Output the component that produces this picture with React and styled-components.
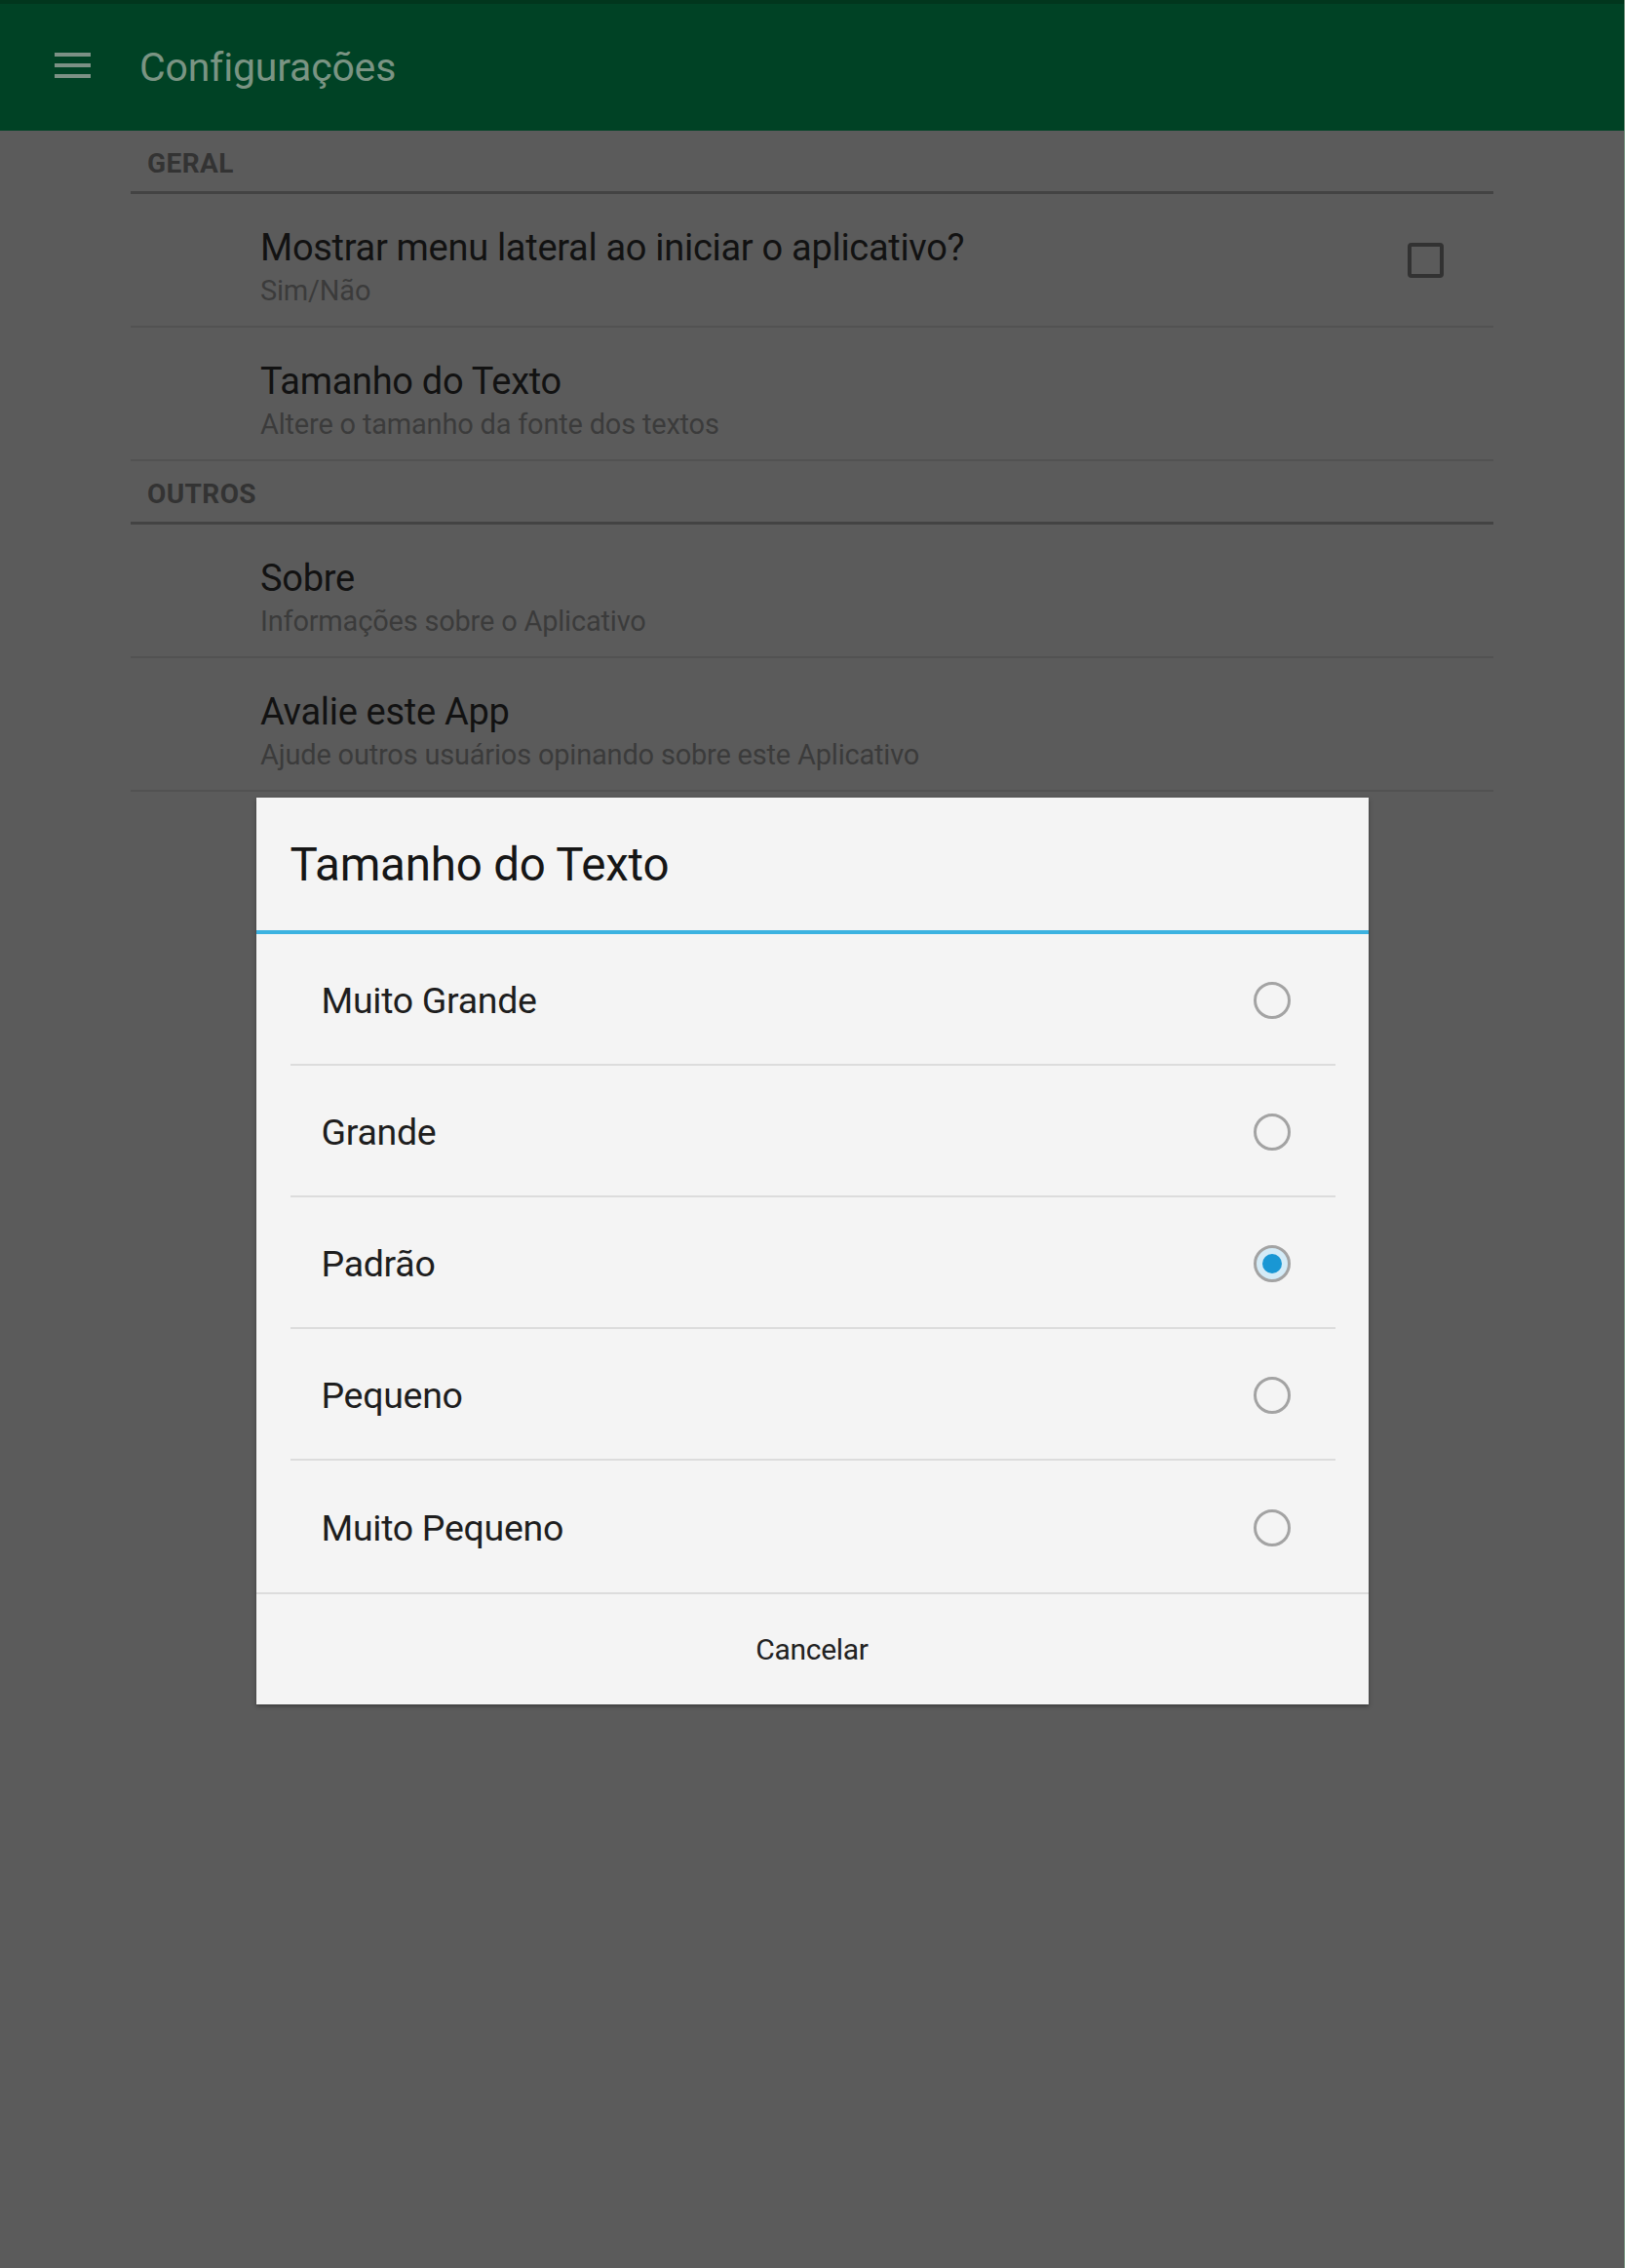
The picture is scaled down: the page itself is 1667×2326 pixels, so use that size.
import React from "react";
import styled, { createGlobalStyle } from "styled-components";

const GlobalStyle = createGlobalStyle`
  body {
    margin: 0;
    background: #5b5b5b;
    font-family: Roboto, "Noto Sans", "Liberation Sans", sans-serif;
  }
`;

const sections = [
  {
    name: "GERAL",
    items: [
      { title: "Mostrar menu lateral ao iniciar o aplicativo?", summary: "Sim/Não", checkbox: true },
      { title: "Tamanho do Texto", summary: "Altere o tamanho da fonte dos textos" },
    ],
  },
  {
    name: "OUTROS",
    items: [
      { title: "Sobre", summary: "Informações sobre o Aplicativo" },
      { title: "Avalie este App", summary: "Ajude outros usuários opinando sobre este Aplicativo" },
    ],
  },
];

const sizes = ["Muito Grande", "Grande", "Padrão", "Pequeno", "Muito Pequeno"];

const App = () => {
  const selected = "Padrão";

  return (
    <Screen>
      <GlobalStyle />
      <Toolbar>
        <MenuIcon>
          <span />
          <span />
          <span />
        </MenuIcon>
        <ToolbarTitle>Configurações</ToolbarTitle>
      </Toolbar>

      <Settings>
        {sections.map((section) => (
          <section key={section.name}>
            <SectionHeader>{section.name}</SectionHeader>
            {section.items.map((item) => (
              <PrefRow key={item.title}>
                <PrefText>
                  <PrefTitle>{item.title}</PrefTitle>
                  <PrefSummary>{item.summary}</PrefSummary>
                </PrefText>
                {item.checkbox && <CheckBox />}
              </PrefRow>
            ))}
          </section>
        ))}
      </Settings>

      <Scrim>
        <Dialog>
          <DialogTitle>Tamanho do Texto</DialogTitle>
          <OptionList>
            {sizes.map((size) => (
              <Option key={size}>
                <OptionLabel>{size}</OptionLabel>
                <Radio checked={size === selected} />
              </Option>
            ))}
          </OptionList>
          <ButtonBar>
            <DialogButton>Cancelar</DialogButton>
          </ButtonBar>
        </Dialog>
      </Scrim>
    </Screen>
  );
};

const Screen = styled.div`
  position: relative;
  min-height: 2326px;
  background: #5b5b5b;
  border-right: 1px solid #7f9a88;
  box-sizing: border-box;
`;

const Toolbar = styled.header`
  height: 134px;
  box-sizing: border-box;
  border-top: 4px solid #01361d;
  background: #004225;
  display: flex;
  align-items: center;
  padding-left: 56px;
  gap: 50px;
`;

const MenuIcon = styled.div`
  width: 37px;
  display: flex;
  flex-direction: column;
  gap: 7px;
  margin-top: -4px;

  > span {
    display: block;
    height: 4px;
    background: #7c9185;
  }
`;

const ToolbarTitle = styled.h1`
  margin: 0;
  font-size: 41px;
  font-weight: 400;
  color: #7a9483;
  letter-spacing: -0.2px;
`;

const Settings = styled.main`
  margin: 0 134px;
`;

const SectionHeader = styled.h2`
  margin: 0;
  height: 65px;
  box-sizing: border-box;
  padding: 18px 0 0 17px;
  border-bottom: 3px solid #434343;
  font-size: 28px;
  font-weight: 700;
  color: #333333;
  line-height: 32px;
  letter-spacing: 0.4px;
`;

const PrefRow = styled.div`
  height: 137px;
  box-sizing: border-box;
  border-bottom: 2px solid #525252;
  display: flex;
  align-items: center;
  padding: 0 51px 0 133px;
`;

const PrefText = styled.div`
  flex: 1;
  align-self: flex-start;
  display: flex;
  flex-direction: column;
  gap: 5px;
  padding-top: 33px;
`;

const PrefTitle = styled.div`
  font-size: 38px;
  color: #121212;
  line-height: 44px;
  letter-spacing: -0.3px;
`;

const PrefSummary = styled.div`
  font-size: 29px;
  color: #3b3b3b;
  line-height: 34px;
  letter-spacing: -0.2px;
`;

const CheckBox = styled.div`
  width: 37px;
  height: 36px;
  box-sizing: border-box;
  border: 4px solid #323232;
  border-radius: 4px;
`;

const Scrim = styled.div`
  position: absolute;
  inset: 0;
  display: flex;
  justify-content: center;
  align-items: flex-start;
  padding-top: 818px;
`;

const Dialog = styled.div`
  width: 1141px;
  background: #f4f4f4;
  box-shadow: 0 2px 4px rgba(0, 0, 0, 0.35);
  display: flex;
  flex-direction: column;
`;

const DialogTitle = styled.h2`
  margin: 0;
  height: 140px;
  box-sizing: border-box;
  border-bottom: 4px solid #3cb2e0;
  padding: 2px 35px 0;
  display: flex;
  align-items: center;
  font-size: 47.5px;
  font-weight: 400;
  color: #161616;
  letter-spacing: -0.2px;
`;

const OptionList = styled.div`
  padding: 0 34px 0 35px;
`;

const Option = styled.div`
  height: 135px;
  box-sizing: border-box;
  display: flex;
  align-items: center;
  justify-content: space-between;
  padding: 2px 46px 0 32px;
  border-bottom: 2px solid #dcdcdc;

  &:last-child {
    border-bottom: none;
  }
`;

const OptionLabel = styled.span`
  font-size: 37.5px;
  color: #1e1e1e;
  letter-spacing: -0.3px;
`;

const Radio = styled.span`
  width: 38px;
  height: 38px;
  box-sizing: border-box;
  border-radius: 50%;
  border: 3px solid #a3a3a3;
  display: flex;
  align-items: center;
  justify-content: center;
  background: ${(p) => (p.checked ? "#d3ebf7" : "transparent")};

  &::after {
    content: "";
    display: ${(p) => (p.checked ? "block" : "none")};
    width: 20px;
    height: 20px;
    border-radius: 50%;
    background: #1997d4;
  }
`;

const ButtonBar = styled.div`
  height: 113px;
  border-top: 2px solid #dcdcdc;
  display: flex;
  align-items: center;
  justify-content: center;
`;

const DialogButton = styled.button`
  border: none;
  background: none;
  font-family: inherit;
  font-size: 30px;
  color: #222222;
  letter-spacing: -0.3px;
  padding: 0;
`;

export default App;
